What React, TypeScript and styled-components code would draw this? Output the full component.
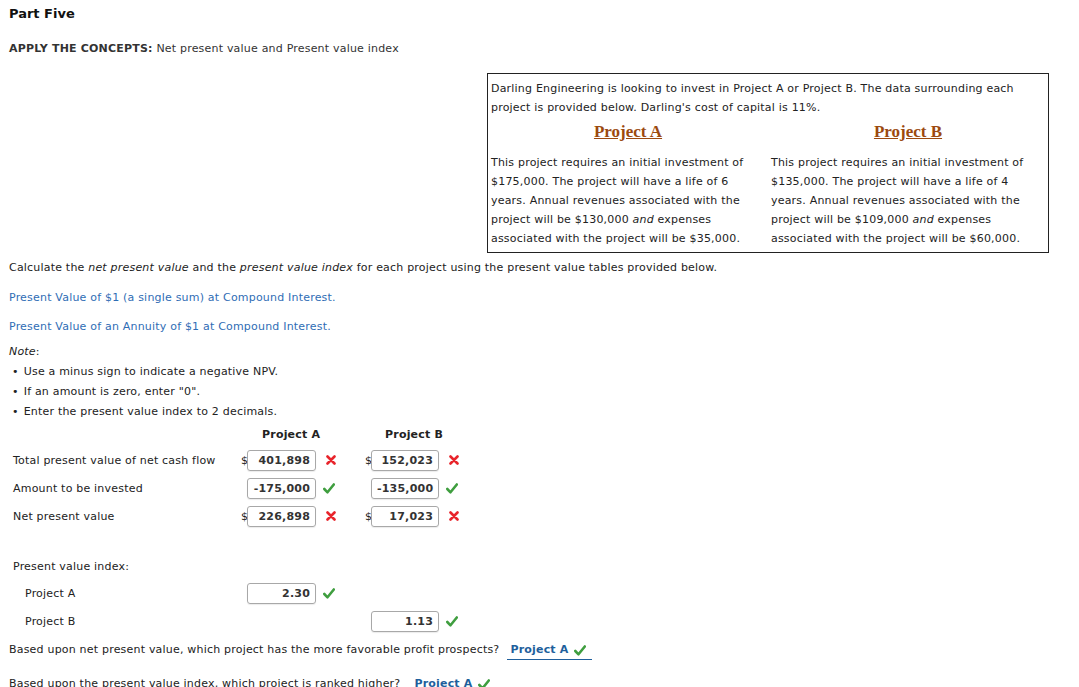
import React from "react";
import styled, { createGlobalStyle } from "styled-components";

const Global = createGlobalStyle`
  html, body { margin: 0; padding: 0; background: #fff; }
  body { font-family: "DejaVu Sans", Verdana, sans-serif; font-size: 11px; letter-spacing: 0.2px; color: #222; }
`;

const Page = styled.div`
  padding: 6px 9px 0 9px;
  width: 1079px;
  box-sizing: border-box;
  overflow: hidden;
  height: 687px;
`;

const Title = styled.div`
  font-weight: bold;
  font-size: 13px;
  letter-spacing: 0;
  color: #111;
  line-height: 16px;
`;

const Subtitle = styled.div`
  margin-top: 20px;
  line-height: 14px;
  color: #333;
`;

const InfoBox = styled.div`
  margin: 17px 0 0 478px;
  width: 562px;
  box-sizing: border-box;
  border: 1px solid #222;
  padding: 5px 3px 0 3px;
  color: #222;
  line-height: 19px;
  height: 180px;
`;

const Cols = styled.div`
  display: grid;
  grid-template-columns: 265px 1fr;
  column-gap: 15px;
`;

const ProjHead = styled.div<{ $shift: number }>`
  text-align: center;
  padding-left: ${(p) => p.$shift}px;
  font-family: "Liberation Serif", serif;
  font-weight: bold;
  font-size: 17px;
  letter-spacing: 0;
  color: #9c4a0f;
  text-decoration: underline;
  line-height: 20px;
  margin: 5px 0 11px 0;
`;

const ColText = styled.div`
  line-height: 19px;
`;

const Para = styled.div<{ $mt: number }>`
  margin-top: ${(p) => p.$mt}px;
  line-height: 14px;
`;

const Link = styled.div<{ $mt: number }>`
  margin-top: ${(p) => p.$mt}px;
  line-height: 14px;
  color: #2f6db5;
`;

const Bullets = styled.ul`
  margin: 3px 0 0 0;
  padding: 0 0 0 3px;
  list-style: none;
  li { line-height: 20px; }
  li::before { content: "•"; margin-right: 5px; }
`;

const Grid = styled.div<{ $mt: number }>`
  margin-top: ${(p) => p.$mt}px;
  margin-left: 4px;
  display: grid;
  grid-template-columns: 228px 6px 69px 49px 6px 68px 40px;
  grid-auto-rows: 28px;
  align-items: center;
`;

const HeadRow = styled.div`
  margin-left: 4px;
  display: grid;
  grid-template-columns: 228px 123px 1fr;
  font-weight: bold;
  line-height: 14px;
`;

const HeadCell = styled.div<{ $shift: number }>`
  padding-left: ${(p) => p.$shift}px;
`;

const Label = styled.div<{ $indent?: number }>`
  padding-left: ${(p) => p.$indent ?? 0}px;
`;

const Dollar = styled.div``;

const Input = styled.div`
  height: 21px;
  box-sizing: border-box;
  border: 1px solid #a8a8a8;
  border-radius: 3px;
  font-weight: bold;
  color: #333;
  text-align: right;
  padding: 0 5px;
  line-height: 19px;
  box-shadow: 0 1px 1px rgba(0,0,0,0.08);
`;

const Mark = styled.div<{ $ok: boolean }>`
  padding-left: ${(p) => (p.$ok ? 7 : 10)}px;
  display: flex;
  align-items: center;
`;

const Section = styled.div<{ $mt: number }>`
  margin-top: ${(p) => p.$mt}px;
  margin-left: 4px;
  line-height: 14px;
`;

const Question = styled.div<{ $mt: number }>`
  margin-top: ${(p) => p.$mt}px;
  display: flex;
  align-items: flex-start;
  line-height: 14px;
`;

const Answer = styled.div<{ $line?: boolean; $ml: number }>`
  margin-left: ${(p) => p.$ml}px;
  padding: 0 6px 2px 3px;
  font-weight: bold;
  color: #1f5f9c;
  display: flex;
  align-items: center;
  gap: 5px;
  border-bottom: ${(p) => (p.$line ? "1px solid #1f5f9c" : "none")};
`;

const Check = () => (
  <svg width="12" height="11" viewBox="0 0 12 11">
    <path d="M1.3 6 L4.5 9.3 L10.8 1.5" stroke="#3f9e3f" strokeWidth="2.6" fill="none" strokeLinecap="round" strokeLinejoin="round" />
  </svg>
);

const Cross = () => (
  <svg width="10" height="10" viewBox="0 0 10 10">
    <path d="M1.5 1.5 L8.5 8.5 M8.5 1.5 L1.5 8.5" stroke="#e8242b" strokeWidth="2.6" strokeLinecap="round" />
  </svg>
);

const Status = ({ ok }: { ok: boolean }) => <Mark $ok={ok}>{ok ? <Check /> : <Cross />}</Mark>;

export default function App() {
  return (
    <Page>
      <Global />
      <Title>Part Five</Title>
      <Subtitle>
        <b>APPLY THE CONCEPTS:</b> Net present value and Present value index
      </Subtitle>
      <InfoBox>
        <div>
          Darling Engineering is looking to invest in Project A or Project B. The data surrounding each project is provided below. Darling's cost of capital is 11%.
        </div>
        <Cols>
          <div>
            <ProjHead $shift={9}>Project A</ProjHead>
            <ColText>
              This project requires an initial investment of $175,000. The project will have a life of 6 years. Annual revenues associated with the project will be $130,000 <i>and</i> expenses associated with the project will be $35,000.
            </ColText>
          </div>
          <div>
            <ProjHead $shift={0}>Project B</ProjHead>
            <ColText>
              This project requires an initial investment of $135,000. The project will have a life of 4 years. Annual revenues associated with the project will be $109,000 <i>and</i> expenses associated with the project will be $60,000.
            </ColText>
          </div>
        </Cols>
      </InfoBox>
      <Para $mt={8}>
        Calculate the <i>net present value</i> and the <i>present value index</i> for each project using the present value tables provided below.
      </Para>
      <Link $mt={16}>Present Value of $1 (a single sum) at Compound Interest.</Link>
      <Link $mt={15}>Present Value of an Annuity of $1 at Compound Interest.</Link>
      <Para $mt={11}>
        <i>Note</i>:
      </Para>
      <Bullets>
        <li>Use a minus sign to indicate a negative NPV.</li>
        <li>If an amount is zero, enter "0".</li>
        <li>Enter the present value index to 2 decimals.</li>
      </Bullets>
      <HeadRow style={{ marginTop: 6 }}>
        <div />
        <HeadCell $shift={21}>Project A</HeadCell>
        <HeadCell $shift={21}>Project B</HeadCell>
      </HeadRow>
      <Grid $mt={4}>
        <Label>Total present value of net cash flow</Label>
        <Dollar>$</Dollar>
        <Input>401,898</Input>
        <Status ok={false} />
        <Dollar>$</Dollar>
        <Input>152,023</Input>
        <Status ok={false} />

        <Label>Amount to be invested</Label>
        <Dollar />
        <Input>-175,000</Input>
        <Status ok />
        <Dollar />
        <Input>-135,000</Input>
        <Status ok />

        <Label>Net present value</Label>
        <Dollar>$</Dollar>
        <Input>226,898</Input>
        <Status ok={false} />
        <Dollar>$</Dollar>
        <Input>17,023</Input>
        <Status ok={false} />
      </Grid>
      <Section $mt={30}>Present value index:</Section>
      <Grid $mt={5}>
        <Label $indent={12}>Project A</Label>
        <Dollar />
        <Input>2.30</Input>
        <Status ok />
        <Dollar />
        <div />
        <div />

        <Label $indent={12}>Project B</Label>
        <Dollar />
        <div />
        <div />
        <Dollar />
        <Input>1.13</Input>
        <Status ok />
      </Grid>
      <Question $mt={8}>
        Based upon net present value, which project has the more favorable profit prospects?
        <Answer $line $ml={8}>Project A <Check /></Answer>
      </Question>
      <Question $mt={17}>
        Based upon the present value index, which project is ranked higher?
        <Answer $ml={11}>Project A <Check /></Answer>
      </Question>
    </Page>
  );
}
